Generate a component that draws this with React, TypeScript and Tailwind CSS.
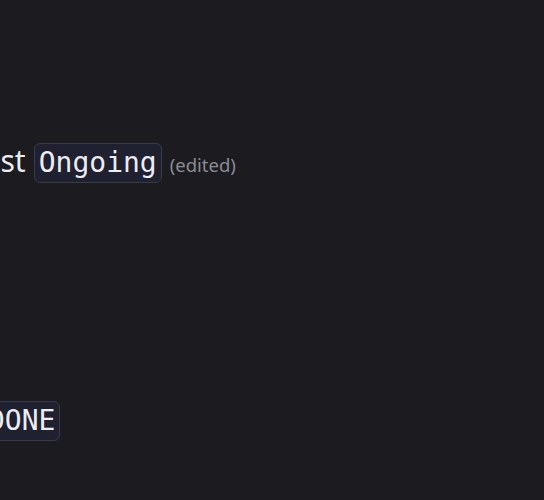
export default function App() {
  const mono = { fontFamily: '"DejaVu Sans Mono", monospace' };
  return (
    <div
      className="h-[500px] w-full overflow-hidden bg-[#1c1b20] text-[#ececf1]"
      style={{ fontFamily: '"Noto Sans", sans-serif' }}
    >
      <div className="ml-[-27px] flex flex-col pt-[141px]">
        <div className="flex items-baseline">
          <span className="ml-[-4px] text-[30px] leading-[40px]">Test</span>
          <span
            className="ml-[8px] rounded-[6px] border border-[#393a48] bg-[#1f2030] px-[4px] text-[28px] leading-[38px]"
            style={mono}
          >
            Ongoing
          </span>
          <span className="ml-[8px] text-[18.5px] text-[#8b8b94]">(edited)</span>
        </div>
        <div className="mt-[218px] flex">
          <span
            className="ml-[10px] rounded-[6px] border border-[#393a48] bg-[#1f2030] px-[4px] text-[28px] leading-[38px]"
            style={mono}
          >
            DONE
          </span>
        </div>
      </div>
    </div>
  );
}
